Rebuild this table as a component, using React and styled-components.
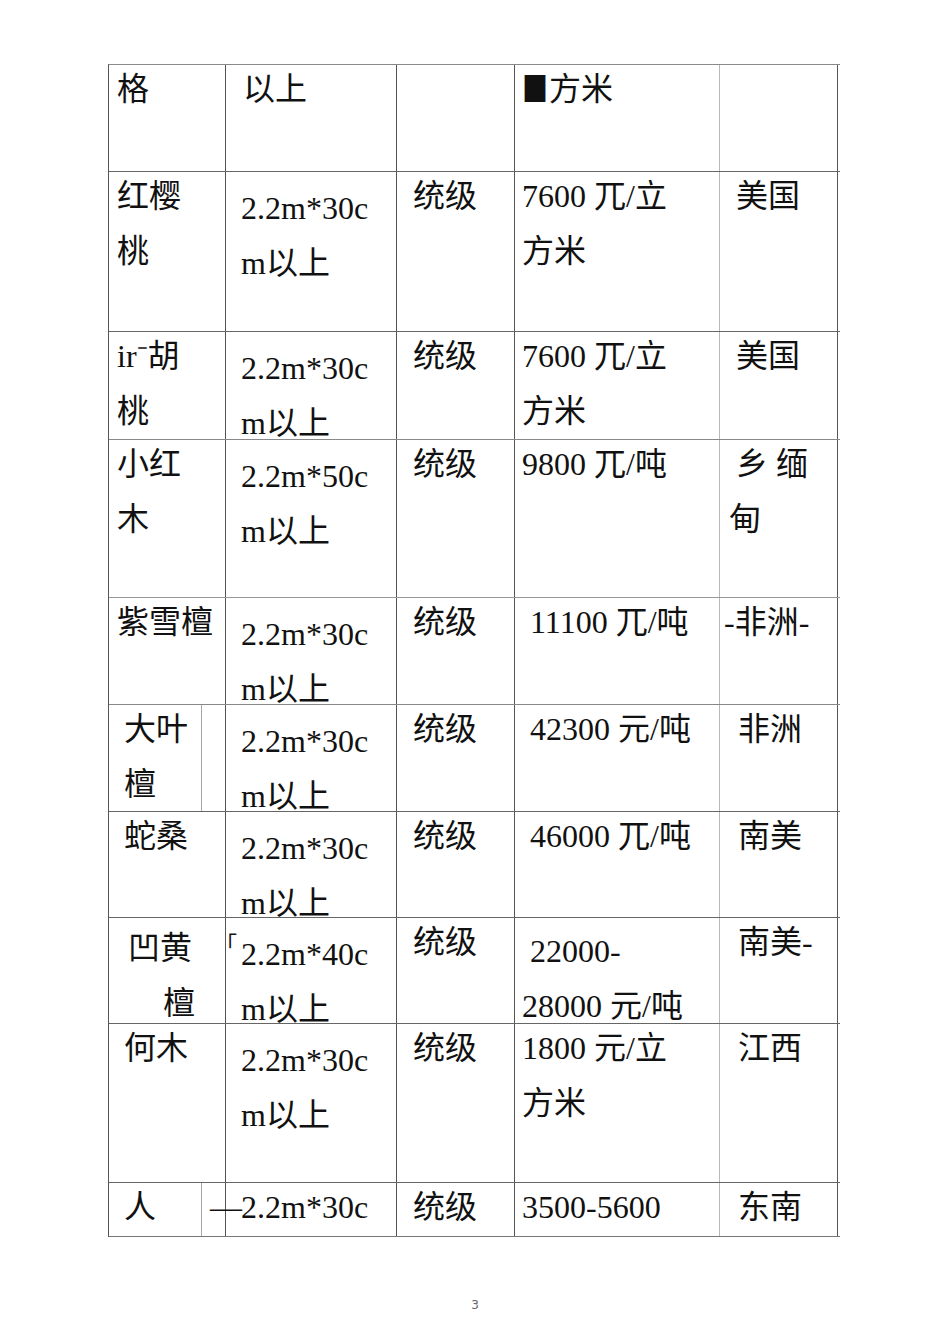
import React from 'react';
import styled, { createGlobalStyle } from 'styled-components';

const GlobalStyle = createGlobalStyle`
  html, body {
    margin: 0;
    padding: 0;
    background: #fff;
  }
  body {
    font-family: "Liberation Serif", "Noto Sans CJK SC", serif;
    color: #111;
  }
`;

const Page = styled.div`
  width: 950px;
  min-height: 1344px;
  padding-top: 64px;
  box-sizing: border-box;
`;

const Table = styled.div`
  margin-left: 108px;
  width: 731px;
  border-top: 1px solid #8a8a8a;
  border-left: 1px solid #555;
`;

const Row = styled.div`
  display: grid;
  grid-template-columns: 117px 171px 118px 205px 118px;
  grid-template-rows: minmax(0, 1fr);
  height: ${p => p.$h}px;
  box-sizing: border-box;
  border-bottom: 1px solid ${p => p.$line || '#666'};
`;

const Cell = styled.div`
  box-sizing: border-box;
  border-right: 1px solid ${p => (p.$light ? '#b8b8b8' : '#555')};
  padding-top: ${p => p.$pt || 0}px;
  padding-left: ${p => p.$pl || 0}px;
  font-size: 32px;
  min-width: 0;
  min-height: 0;
`;

const SplitCell = styled(Cell)`
  display: flex;
  padding: 0;
`;

const NameBox = styled.div`
  box-sizing: border-box;
  width: 93px;
  height: 100%;
  border-right: 1px solid #a8a8a8;
  padding-top: ${p => p.$pt || 0}px;
  padding-left: ${p => p.$pl || 0}px;
`;

const Line = styled.div`
  height: 55px;
  line-height: 48px;
  white-space: nowrap;
  margin-left: ${p => p.$indent || 0}px;
`;

const Dash = styled.span`
  display: inline-block;
  width: 31px;
  margin-left: -31px;
`;

const Bracket = styled.span`
  display: inline-block;
  width: 26px;
  margin-left: -26px;
  font-size: 22px;
  vertical-align: top;
  line-height: 30px;
`;

const Square = styled.span`
  display: inline-block;
  width: 27px;
  margin-left: -2px;
  font-family: "Noto Sans CJK SC", sans-serif;
  font-size: 26px;
  transform: scaleY(1.3);
  transform-origin: 0 60%;
`;

const PageNum = styled.div`
  margin-top: 61px;
  text-align: center;
  font-family: "DejaVu Sans", sans-serif;
  font-size: 12px;
  color: #666;
`;

const size30 = ['2.2m*30c', 'm以上'];

const rows = [
  {
    h: 107,
    cells: [
      { lines: ['格'], pl: 8 },
      { lines: ['以上'], pl: 17 },
      { lines: [] },
      { lines: [{ t: '方米', square: true }], pl: 9, light: true },
      { lines: [] },
    ],
  },
  {
    h: 160,
    cells: [
      { lines: ['红樱', '桃'], pl: 8 },
      { lines: size30, pl: 15, pt: 12 },
      { lines: ['统级'], pl: 16 },
      { lines: ['7600 兀/立', '方米'], pl: 7, light: true },
      { lines: ['美国'], pl: 16 },
    ],
  },
  {
    h: 108,
    line: '#888',
    cells: [
      { lines: ['ir⁻胡', '桃'], pl: 8 },
      { lines: size30, pl: 15, pt: 12 },
      { lines: ['统级'], pl: 16 },
      { lines: ['7600 兀/立', '方米'], pl: 7, light: true },
      { lines: ['美国'], pl: 16 },
    ],
  },
  {
    h: 158,
    line: '#999',
    cells: [
      { lines: ['小红', '木'], pl: 8 },
      { lines: ['2.2m*50c', 'm以上'], pl: 15, pt: 12 },
      { lines: ['统级'], pl: 16 },
      { lines: ['9800 兀/吨'], pl: 7, light: true },
      { lines: ['乡 缅', { t: '甸', indent: -7 }], pl: 16 },
    ],
  },
  {
    h: 107,
    line: '#888',
    cells: [
      { lines: ['紫雪檀'], pl: 8 },
      { lines: size30, pl: 15, pt: 12 },
      { lines: ['统级'], pl: 16 },
      { lines: ['11100 兀/吨'], pl: 15, light: true },
      { lines: ['-非洲-'], pl: 4 },
    ],
  },
  {
    h: 107,
    split: true,
    cells: [
      { lines: ['大叶', '檀'], pl: 15 },
      { lines: size30, pl: 15, pt: 12 },
      { lines: ['统级'], pl: 16 },
      { lines: ['42300 元/吨'], pl: 15, light: true },
      { lines: ['非洲'], pl: 18 },
    ],
  },
  {
    h: 106,
    cells: [
      { lines: ['蛇桑'], pl: 15 },
      { lines: size30, pl: 15, pt: 12 },
      { lines: ['统级'], pl: 16 },
      { lines: ['46000 兀/吨'], pl: 15, light: true },
      { lines: ['南美'], pl: 18 },
    ],
  },
  {
    h: 106,
    cells: [
      { lines: ['凹黄', { t: '檀', indent: 35 }], pl: 19, pt: 6 },
      { lines: [{ t: '2.2m*40c', bracket: true }, 'm以上'], pl: 15, pt: 12 },
      { lines: ['统级'], pl: 16 },
      { lines: [{ t: '22000-', indent: 8 }, '28000 元/吨'], pl: 7, pt: 9, light: true },
      { lines: ['南美-'], pl: 18 },
    ],
  },
  {
    h: 159,
    cells: [
      { lines: ['何木'], pl: 15 },
      { lines: size30, pl: 15, pt: 12 },
      { lines: ['统级'], pl: 16 },
      { lines: ['1800 元/立', '方米'], pl: 7, light: true },
      { lines: ['江西'], pl: 18 },
    ],
  },
  {
    h: 54,
    split: true,
    line: '#777',
    cells: [
      { lines: ['人'], pl: 15 },
      { lines: [{ t: '2.2m*30c', dash: true }], pl: 15, pt: 0 },
      { lines: ['统级'], pl: 16 },
      { lines: ['3500-5600'], pl: 7, light: true },
      { lines: ['东南'], pl: 18 },
    ],
  },
];

const renderLine = (line, i) => {
  if (typeof line === 'string') return <Line key={i}>{line}</Line>;
  return (
    <Line key={i} $indent={line.indent}>
      {line.bracket && <Bracket>「</Bracket>}
      {line.dash && <Dash>—</Dash>}
      {line.square && <Square>■</Square>}
      {line.t}
    </Line>
  );
};

const App = () => (
  <Page>
    <GlobalStyle />
    <Table>
      {rows.map((row, r) => (
        <Row key={r} $h={row.h} $line={row.line}>
          {row.cells.map((cell, c) => {
            if (c === 0 && row.split) {
              return (
                <SplitCell key={c}>
                  <NameBox $pl={cell.pl} $pt={cell.pt}>
                    {cell.lines.map(renderLine)}
                  </NameBox>
                </SplitCell>
              );
            }
            return (
              <Cell key={c} $pl={cell.pl} $pt={cell.pt} $light={cell.light}>
                {cell.lines.map(renderLine)}
              </Cell>
            );
          })}
        </Row>
      ))}
    </Table>
    <PageNum>3</PageNum>
  </Page>
);

export default App;
